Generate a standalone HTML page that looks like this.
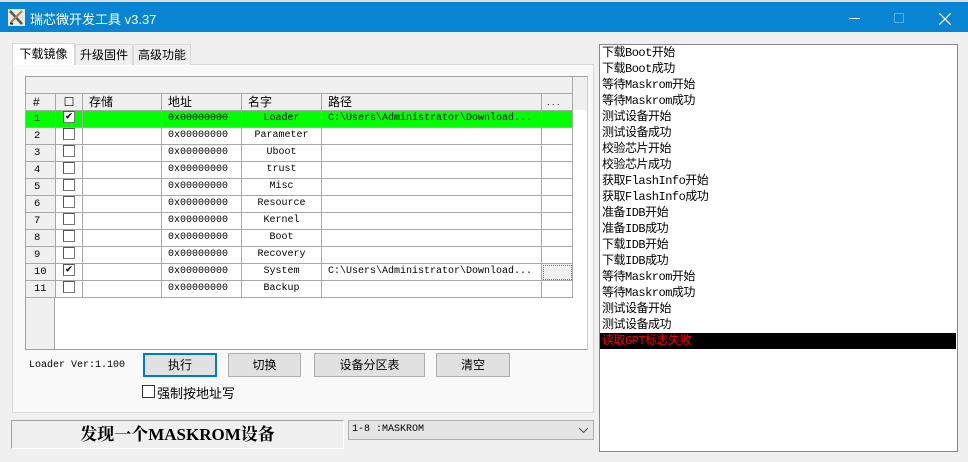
<!DOCTYPE html>
<html><head><meta charset="utf-8"><style>
*{margin:0;padding:0;box-sizing:border-box}
body{width:968px;height:462px;background:#f0f0f0;position:relative;overflow:hidden;font-family:"Liberation Sans","Noto Sans CJK SC",sans-serif;font-size:12px;color:#000}
.a{position:absolute}
.title{left:0;top:2px;width:968px;height:30px;background:#0785d2;color:#fff;font-size:13px}
.tab{top:44px;height:21px;border:1px solid #d9d9d9;border-bottom:none;background:#f0f0f0;font-size:12px;line-height:20px;text-align:center}
table{border-collapse:collapse;table-layout:fixed;font-family:"Liberation Mono","Noto Sans CJK SC",monospace;font-size:10px}
td{border:1px solid #a8a8a8;height:17px;padding:0;white-space:nowrap;overflow:hidden;line-height:16px}
.hd td{background:#f0f0f0;font-family:"Liberation Sans","Noto Sans CJK SC",sans-serif;font-size:12px;padding-left:6px}
td.n{background:#f0f0f0;padding-left:8px;font-size:10.5px}
td.c{text-align:center}
.g td{background:#00ff00}
.cb{display:inline-block;width:12px;height:12px;border:1px solid #777;border-top-color:#555;border-left-color:#555;background:#fff;vertical-align:middle;font-size:11px;line-height:10px;text-align:center;font-weight:bold}
.btn{top:353px;height:24px;background:#e1e1e1;border:1px solid #adadad;text-align:center;line-height:22px;font-size:12px}
.log{left:599px;top:44px;width:359px;height:408px;background:#fff;border:1px solid #828790;font-family:"Liberation Mono","Noto Sans CJK SC",monospace;font-size:12px}
.log div{height:16px;line-height:16px;padding-left:2px;white-space:nowrap;letter-spacing:-0.5px}
</style></head><body>
<div class="a" style="left:0;top:0;width:968px;height:2px;background:#dcdcdc"></div>
<div class="a title">
 <svg class="a" style="left:8px;top:7px" width="17" height="17" viewBox="0 0 17 17"><rect width="17" height="17" fill="#e8e8e8"/><path d="M2 2 L14 15" stroke="#555" stroke-width="2.5"/><path d="M14 2 L3 13" stroke="#b08030" stroke-width="2"/><path d="M2 14l3 1" stroke="#333" stroke-width="2"/></svg>
 <span class="a" style="left:30px;top:7px">瑞芯微开发工具 v3.37</span>
 <div class="a" style="left:849px;top:16px;width:11px;height:1px;background:#fff"></div>
 <div class="a" style="left:894px;top:11px;width:10px;height:10px;border:1px solid #5aaee6"></div>
 <svg class="a" style="left:939px;top:11px" width="12" height="12"><path d="M0 0L12 12M12 0L0 12" stroke="#fff" stroke-width="1.2"/></svg>
</div>

<div class="a" style="left:12px;top:64px;width:582px;height:349px;background:#f9f9f9;border:1px solid #d9d9d9"></div>
<div class="a tab" style="left:12px;top:43px;width:63px;height:22px;background:#fff;z-index:2">下载镜像</div>
<div class="a tab" style="left:75px;width:58px">升级固件</div>
<div class="a tab" style="left:133px;width:58px">高级功能</div>

<div class="a" style="left:25px;top:76px;width:563px;height:274px;background:#fff;border:1px solid #a0a0a0;border-right-color:#ccc"></div>
<div class="a" style="left:26px;top:77px;width:546px;height:17px;background:#f0f0f0;border-bottom:1px solid #a8a8a8"></div>
<div class="a" style="left:572px;top:77px;width:15px;height:33px;background:#f0f0f0;border-left:1px solid #a8a8a8"></div>
<div class="a" style="left:26px;top:297px;width:29px;height:52px;background:#f0f0f0;border-right:1px solid #a8a8a8"></div>
<table class="a" style="left:25px;top:93px;width:548px">
<colgroup><col style="width:30px"><col style="width:27px"><col style="width:79px"><col style="width:80px"><col style="width:80px"><col style="width:220px"><col style="width:31px"></colgroup>
<tr class="hd"><td style="padding-left:7px">#</td><td class="c" style="padding:0">☐</td><td>存储</td><td>地址</td><td>名字</td><td>路径</td><td style="padding-left:5px;font-size:9px">. . .</td></tr>
<tr class="g"><td class="n" style="background:#00ff00">1</td><td class="c"><span class="cb">✔</span></td><td></td><td style="padding-left:6px">0x00000000</td><td class="c">Loader</td><td style="padding-left:6px">C:\Users\Administrator\Download...</td><td></td></tr>
<tr><td class="n">2</td><td class="c"><span class="cb"></span></td><td></td><td style="padding-left:6px">0x00000000</td><td class="c">Parameter</td><td></td><td></td></tr>
<tr><td class="n">3</td><td class="c"><span class="cb"></span></td><td></td><td style="padding-left:6px">0x00000000</td><td class="c">Uboot</td><td></td><td></td></tr>
<tr><td class="n">4</td><td class="c"><span class="cb"></span></td><td></td><td style="padding-left:6px">0x00000000</td><td class="c">trust</td><td></td><td></td></tr>
<tr><td class="n">5</td><td class="c"><span class="cb"></span></td><td></td><td style="padding-left:6px">0x00000000</td><td class="c">Misc</td><td></td><td></td></tr>
<tr><td class="n">6</td><td class="c"><span class="cb"></span></td><td></td><td style="padding-left:6px">0x00000000</td><td class="c">Resource</td><td></td><td></td></tr>
<tr><td class="n">7</td><td class="c"><span class="cb"></span></td><td></td><td style="padding-left:6px">0x00000000</td><td class="c">Kernel</td><td></td><td></td></tr>
<tr><td class="n">8</td><td class="c"><span class="cb"></span></td><td></td><td style="padding-left:6px">0x00000000</td><td class="c">Boot</td><td></td><td></td></tr>
<tr><td class="n">9</td><td class="c"><span class="cb"></span></td><td></td><td style="padding-left:6px">0x00000000</td><td class="c">Recovery</td><td></td><td></td></tr>
<tr><td class="n">10</td><td class="c"><span class="cb">✔</span></td><td></td><td style="padding-left:6px">0x00000000</td><td class="c">System</td><td style="padding-left:6px">C:\Users\Administrator\Download...</td><td style="background:#f0f0f0;outline:1px dotted #c06000;outline-offset:-2px"></td></tr>
<tr><td class="n">11</td><td class="c"><span class="cb"></span></td><td></td><td style="padding-left:6px">0x00000000</td><td class="c">Backup</td><td></td><td></td></tr>
</table>

<div class="a" style="left:29px;top:360px;font-family:'Liberation Mono',monospace;font-size:10px">Loader Ver:1.100</div>
<div class="a btn" style="left:143px;width:74px;border:2px solid #0078d7;line-height:20px">执行</div>
<div class="a btn" style="left:228px;width:73px">切换</div>
<div class="a btn" style="left:314px;width:111px">设备分区表</div>
<div class="a btn" style="left:436px;width:74px">清空</div>
<div class="a" style="left:142px;top:385px;width:13px;height:13px;border:1px solid #333;background:#fff"></div>
<div class="a" style="left:157px;top:383px;font-size:13px">强制按地址写</div>

<div class="a" style="left:11px;top:420px;width:333px;height:29px;border:1px solid #a0a0a0;border-right-color:#fff;border-bottom-color:#fff;text-align:center;font-family:'Liberation Serif','Noto Serif CJK SC',serif;font-weight:bold;font-size:17px;line-height:28px">发现一个MASKROM设备</div>
<div class="a" style="left:348px;top:420px;width:246px;height:20px;background:#e5e5e5;border:1px solid #adadad;font-family:'Liberation Mono',monospace;font-size:10px;line-height:18px;padding-left:3px">1-8 :MASKROM
 <svg class="a" style="right:5px;top:7px" width="9" height="5"><path d="M0 0L4.5 4.5L9 0" stroke="#555" fill="none"/></svg></div>

<div class="a log">
<div>下载Boot开始</div><div>下载Boot成功</div><div>等待Maskrom开始</div><div>等待Maskrom成功</div><div>测试设备开始</div><div>测试设备成功</div><div>校验芯片开始</div><div>校验芯片成功</div><div>获取FlashInfo开始</div><div>获取FlashInfo成功</div><div>准备IDB开始</div><div>准备IDB成功</div><div>下载IDB开始</div><div>下载IDB成功</div><div>等待Maskrom开始</div><div>等待Maskrom成功</div><div>测试设备开始</div><div>测试设备成功</div>
<div style="background:#000;color:#f00;margin-right:1px">读取GPT标志失败</div>
</div>
</body></html>
